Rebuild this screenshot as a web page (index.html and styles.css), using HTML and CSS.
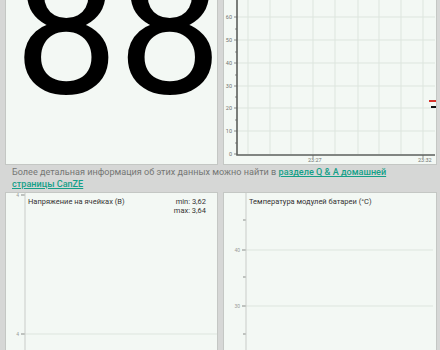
FILE: index.html
```html
<!DOCTYPE html>
<html lang="ru">
<head>
  <meta charset="UTF-8" />
  <meta name="viewport" content="width=device-width, initial-scale=1" />
  <title>CanZE - Батарея</title>
  <link rel="stylesheet" href="styles.css">
</head>
<body>
  <div class="row top">
    <div class="panel soc">
      <div class="big">88</div>
    </div>
    <div class="panel chart">
      <svg class="plot" width="214" height="164" viewBox="0 0 214 164">
        <g class="grid">
          <line x1="13" y1="17" x2="211" y2="17" />
          <line x1="13" y1="40" x2="211" y2="40" />
          <line x1="13" y1="63" x2="211" y2="63" />
          <line x1="13" y1="86" x2="211" y2="86" />
          <line x1="13" y1="108" x2="211" y2="108" />
          <line x1="13" y1="131" x2="211" y2="131" />
          <line x1="24" y1="0" x2="24" y2="154" />
          <line x1="46" y1="0" x2="46" y2="154" />
          <line x1="67" y1="0" x2="67" y2="154" />
          <line x1="89" y1="0" x2="89" y2="154" />
          <line x1="111" y1="0" x2="111" y2="154" />
          <line x1="134" y1="0" x2="134" y2="154" />
          <line x1="155" y1="0" x2="155" y2="154" />
          <line x1="177" y1="0" x2="177" y2="154" />
          <line x1="199" y1="0" x2="199" y2="154" />
        </g>
        <g class="ticks">
          <line x1="10" y1="17" x2="13" y2="17" />
          <line x1="11" y1="29" x2="13" y2="29" />
          <line x1="10" y1="40" x2="13" y2="40" />
          <line x1="11" y1="52" x2="13" y2="52" />
          <line x1="10" y1="63" x2="13" y2="63" />
          <line x1="11" y1="75" x2="13" y2="75" />
          <line x1="10" y1="86" x2="13" y2="86" />
          <line x1="11" y1="97" x2="13" y2="97" />
          <line x1="10" y1="108" x2="13" y2="108" />
          <line x1="11" y1="120" x2="13" y2="120" />
          <line x1="10" y1="131" x2="13" y2="131" />
          <line x1="11" y1="143" x2="13" y2="143" />
          <line x1="10" y1="154" x2="13" y2="154" />
          <line x1="89" y1="155" x2="89" y2="158" />
          <line x1="199" y1="155" x2="199" y2="158" />
        </g>
        <path class="axis" d="M13 0 V155 H211" />
        <g class="labels">
          <text x="8" y="19">60</text>
          <text x="8" y="42">50</text>
          <text x="8" y="65">40</text>
          <text x="8" y="88">30</text>
          <text x="8" y="110">20</text>
          <text x="8" y="133">10</text>
          <text x="8" y="156">0</text>
        </g>
        <g class="xlabels">
          <text x="84" y="162">23:27</text>
          <text x="194" y="162">23:32</text>
        </g>
        <rect x="205" y="100" width="7" height="2" fill="#d6322a" />
        <rect x="207" y="106" width="5" height="2" fill="#111" />
      </svg>
    </div>
  </div>

  <p class="info">Более детальная информация об этих данных можно найти в <a href="#">разделе Q &amp; A домашней страницы CanZE</a></p>

  <div class="row bottom">
    <div class="panel chart">
      <div class="head">
        <span class="title">Напряжение на ячейках (В)</span>
        <span class="minmax">min: 3,62<br>max: 3,64</span>
      </div>
      <svg class="plot" width="211" height="160" viewBox="0 0 211 160">
        <line class="grid-line" x1="19" y1="141" x2="211" y2="141" />
        <line class="tick" x1="15" y1="2" x2="19" y2="2" />
        <line class="tick" x1="15" y1="141" x2="19" y2="141" />
        <line class="axis-thin" x1="19" y1="0" x2="19" y2="160" />
        <g class="labels small">
          <text x="13" y="4">4</text>
          <text x="13" y="143">4</text>
        </g>
      </svg>
    </div>
    <div class="panel chart">
      <div class="head">
        <span class="title">Температура модулей батареи (°C)</span>
      </div>
      <svg class="plot" width="214" height="160" viewBox="0 0 214 160">
        <line class="grid-line" x1="22" y1="57" x2="209" y2="57" />
        <line class="grid-line" x1="22" y1="113" x2="209" y2="113" />
        <line class="tick" x1="19" y1="27" x2="22" y2="27" />
        <line class="tick" x1="18" y1="57" x2="22" y2="57" />
        <line class="tick" x1="19" y1="84" x2="22" y2="84" />
        <line class="tick" x1="18" y1="113" x2="22" y2="113" />
        <line class="tick" x1="19" y1="141" x2="22" y2="141" />
        <line class="axis-thin" x1="22" y1="0" x2="22" y2="160" />
        <g class="labels small">
          <text x="16" y="59">40</text>
          <text x="16" y="115">30</text>
        </g>
      </svg>
    </div>
  </div>
</body>
</html>
```

FILE: styles.css
```css
body {
  margin: 0;
  background: #d6d7d6;
  font-family: Roboto, "Noto Sans", sans-serif;
  width: 440px;
  height: 350px;
  overflow: hidden;
}
.row {
  display: flex;
  gap: 5px;
  padding: 0 3px 0 5px;
}
.row.top {
  height: 165px;
}
.row.bottom {
  height: 160px;
}
.panel {
  background: #f3f8f4;
  border: 1px solid #c4c7c4;
  overflow: hidden;
  position: relative;
}
.row.top .panel {
  border-top: none;
}
.row.bottom .panel {
  border-bottom: none;
}
.soc {
  width: 211px;
}
.chart {
  flex: 1;
}
.row.bottom .chart:first-child {
  flex: 0 0 211px;
}
.big {
  font-size: 186px;
  line-height: 1;
  margin-top: -64px;
  padding-left: 8px;
  color: #000;
  letter-spacing: -1px;
}
.plot {
  display: block;
}
.grid line,
.grid-line {
  stroke: #dde5de;
  stroke-width: 1;
}
.ticks line,
.tick {
  stroke: #8a8d8a;
  stroke-width: 1;
}
.axis {
  fill: none;
  stroke: #5c5f5c;
  stroke-width: 1.6;
}
.axis-thin {
  stroke: #c9ccc9;
  stroke-width: 1;
}
.labels text {
  font-size: 5.5px;
  fill: #707370;
  text-anchor: end;
}
.labels.small text {
  fill: #9a9d9a;
  font-size: 5px;
}
.xlabels text {
  font-size: 5.5px;
  fill: #707370;
}
.info {
  margin: 0;
  padding: 2px 40px 2px 12px;
  height: 23px;
  font-size: 9.1px;
  line-height: 11.5px;
  color: #747674;
}
.info a {
  color: #14a088;
  font-weight: 500;
  text-decoration: underline;
}
.head {
  position: absolute;
  top: 4px;
  left: 22px;
  right: 11px;
  display: flex;
  justify-content: space-between;
  font-size: 7.5px;
  line-height: 9px;
  color: #333;
}
.row.bottom .chart:last-child .head {
  left: 25px;
}
.minmax {
  text-align: right;
}
```
